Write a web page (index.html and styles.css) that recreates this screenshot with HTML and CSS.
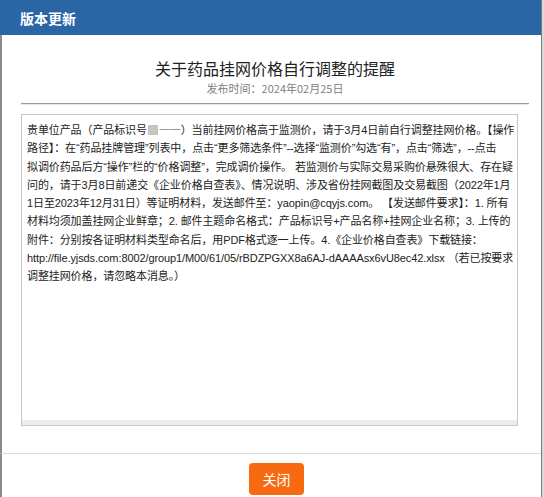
FILE: index.html
```html
<!DOCTYPE html>
<html lang="zh-CN">
<head>
<meta charset="utf-8">
<title>版本更新</title>
<link rel="stylesheet" href="styles.css">
</head>
<body>
<div class="dialog">
  <div class="header">版本更新</div>
  <div class="main">
    <h1 class="title">关于药品挂网价格自行调整的提醒</h1>
    <div class="date">发布时间：2024年02月25日</div>
    <div class="rule"></div>
    <div class="box">
      <p class="msg">贵单位产品（产品标识号<span class="mask"></span><span class="dash">一一</span>）当前挂网价格高于监测价，请于3月4日前自行调整挂网价格。【操作<br>路径】：在“药品挂牌管理”列表中，点击“更多筛选条件”--选择“监测价”勾选“有”，点击“筛选”，--点击<br>拟调价药品后方“操作”栏的“价格调整”，完成调价操作。 若监测价与实际交易采购价悬殊很大、存在疑<br>问的，请于3月8日前递交《企业价格自查表》、情况说明、涉及省份挂网截图及交易截图（2022年1月<br>1日至2023年12月31日）等证明材料，发送邮件至：yaopin@cqyjs.com。 【发送邮件要求】：1. 所有<br>材料均须加盖挂网企业鲜章；2. 邮件主题命名格式：产品标识号+产品名称+挂网企业名称；3. 上传的<br>附件：分别按各证明材料类型命名后，用PDF格式逐一上传。4.《企业价格自查表》下载链接：<br>http://file.yjsds.com:8002/group1/M00/61/05/rBDZPGXX8a6AJ-dAAAAsx6vU8ec42.xlsx （若已按要求<br>调整挂网价格，请忽略本消息。）</p>
    </div>
  </div>
  <div class="footer">
    <button class="btn" type="button">关闭</button>
  </div>
</div>
</body>
</html>
```
FILE: styles.css
```css
html, body {
  margin: 0;
  padding: 0;
}
body {
  background: #d9d9d9;
  font-family: "Noto Sans CJK SC", "Microsoft YaHei", sans-serif;
  color: #333;
  width: 544px;
  height: 497px;
  overflow: hidden;
}
.dialog {
  width: 541px;
  height: 497px;
  display: flex;
  flex-direction: column;
  background: #fff;
  border-right: 1px solid #7a7a7a;
}
.header {
  height: 35px;
  flex: none;
  background: #2a65a6;
  color: #fff;
  font-weight: bold;
  font-size: 14px;
  padding-left: 20px;
  display: flex;
  align-items: center;
}
.main {
  flex: 1;
  border-left: 2px solid #8c8c8c;
  padding: 0 12px 0 19px;
  display: flex;
  flex-direction: column;
}
.title {
  margin: 23px 0 0;
  font-size: 16px;
  font-weight: normal;
  line-height: 21px;
  text-align: center;
  color: #222;
}
.date {
  margin-top: 2px;
  font-size: 11px;
  line-height: 14px;
  color: #808080;
  text-align: center;
}
.rule {
  margin-top: 8px;
  height: 1px;
  background: #9a9a9a;
  box-shadow: 0 1px 0 #e6e6e6;
}
.box {
  margin-top: 10px;
  width: 495px;
  height: 310px;
  border: 1px solid #c6c6c6;
  box-shadow: inset 0 -5px 0 #ececec;
  overflow: hidden;
}
.msg {
  margin: 0;
  padding: 6px 0 0 5px;
  font-family: "Liberation Sans", "Noto Sans CJK SC", sans-serif;
  font-size: 11px;
  letter-spacing: -0.1px;
  line-height: 18.3px;
  white-space: nowrap;
  color: #222;
}
.mask {
  display: inline-block;
  width: 10px;
  height: 10px;
  margin: 0 1px;
  background: #c4c4c4;
  vertical-align: -1px;
}
.dash {
  color: #999;
}
.footer {
  height: 44px;
  flex: none;
  border-top: 1px solid #dcdcdc;
  border-left: 2px solid #8c8c8c;
  display: flex;
  justify-content: center;
  padding-left: 10px;
  box-sizing: border-box;
}
.btn {
  margin-top: 9px;
  width: 55px;
  height: 32px;
  border: none;
  border-radius: 4px;
  background: #f86a12;
  color: #fff;
  font-family: inherit;
  font-size: 14px;
  padding: 0;
}
```
